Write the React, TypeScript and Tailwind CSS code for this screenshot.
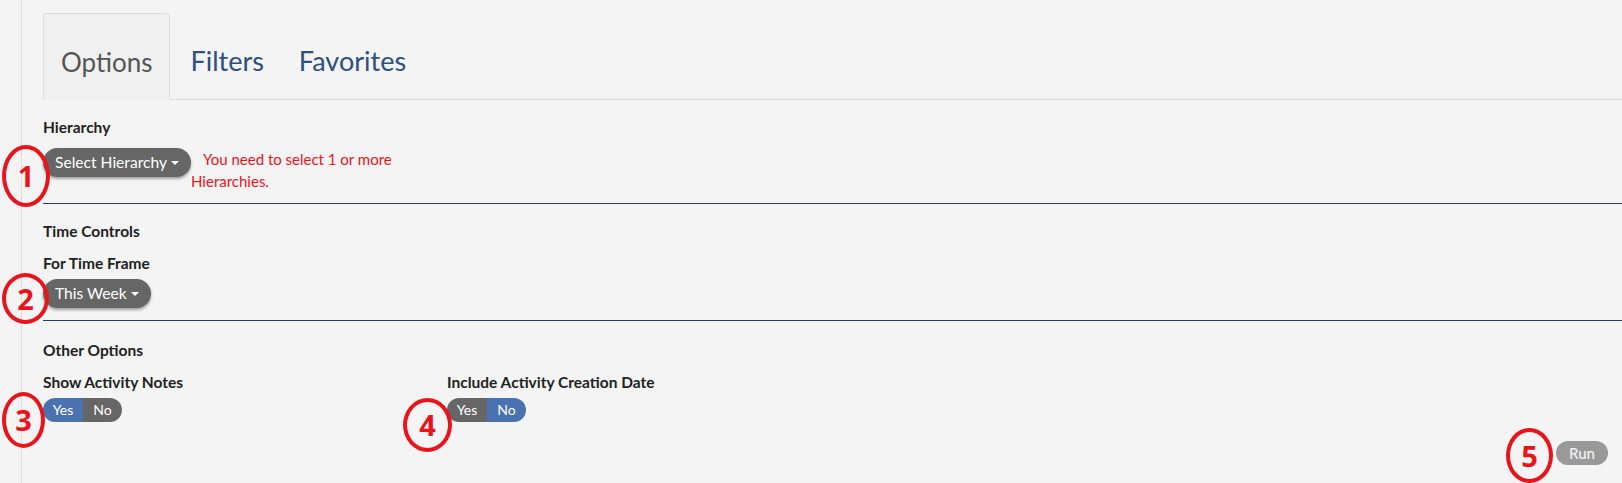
import React from "react";

function Caret() {
  return <span className="ml-[4px] inline-block align-middle border-x-[4px] border-x-transparent border-t-[4px] border-t-white" />;
}

function PillButton({ label }: { label: string }) {
  return (
    <button className="h-[29px] px-[12px] rounded-full bg-[#666666] text-white text-[15.6px] leading-[29px] shadow-[0_2px_3px_rgba(0,0,0,0.35)] flex items-center whitespace-nowrap">
      {label}
      <Caret />
    </button>
  );
}

function YesNo({ yes }: { yes: boolean }) {
  return (
    <div className="flex h-[24px] text-[14px] text-white leading-[24px]">
      <span className={`w-[40px] text-center rounded-l-full ${yes ? "bg-[#4a72b0]" : "bg-[#666666]"}`}>Yes</span>
      <span className={`w-[39px] text-center rounded-r-full ${yes ? "bg-[#666666]" : "bg-[#4a72b0]"}`}>No</span>
    </div>
  );
}

function Marker({ n, className }: { n: number; className: string }) {
  return (
    <div
      className={`absolute rounded-[50%] border-[4px] border-[#e8141c] flex items-center justify-center text-[#e8141c] text-[29px] font-bold font-['Open_Sans',sans-serif] ${className}`}
    >
      {n}
    </div>
  );
}

function Label({ children, className = "" }: { children: React.ReactNode; className?: string }) {
  return <div className={`text-[15.5px] font-bold leading-[20px] text-[#222] ${className}`}>{children}</div>;
}

export default function App() {
  return (
    <div className="relative min-h-[483px] bg-[#f4f4f4] font-['Lato',sans-serif] overflow-hidden">
      <div className="ml-[21px] border-l border-[#dddddd] pl-[21px] min-h-[483px]">
        {/* Tabs */}
        <div className="pt-[13px] flex border-b border-[#dddddd]">
          <div className="-mb-px px-[17px] pt-[31px] pb-[20px] leading-[34px] text-[26px] text-[#555] bg-[#f0f0f0] border border-[#dddddd] border-b-[#f0f0f0] rounded-t-[4px]">
            Options
          </div>
          <div className="pl-[20px] pr-[19px] pt-[31px] pb-[20px] leading-[34px] text-[27px] text-[#2f4f7f]">Filters</div>
          <div className="px-[16px] pt-[31px] pb-[20px] leading-[34px] text-[27px] text-[#2f4f7f]">Favorites</div>
        </div>

        {/* Hierarchy */}
        <Label className="mt-[17px]">Hierarchy</Label>
        <div className="mt-[11px] flex items-start">
          <PillButton label="Select Hierarchy" />
          <div className="w-[205px] indent-[12px] text-[15px] leading-[22px] text-[#e8141c]">
            You need to select 1 or more Hierarchies.
          </div>
        </div>
        <div className="mt-[11px] border-t border-[#2b3a5c]" />

        {/* Time Controls */}
        <Label className="mt-[17px]">Time Controls</Label>
        <Label className="mt-[12px]">For Time Frame</Label>
        <div className="mt-[6px] flex">
          <PillButton label="This Week" />
        </div>
        <div className="mt-[12px] border-t border-[#2b3a5c]" />

        {/* Other Options */}
        <Label className="mt-[19px]">Other Options</Label>
        <div className="mt-[12px] flex">
          <div className="w-[404px]">
            <Label>Show Activity Notes</Label>
            <div className="mt-[6px] flex">
              <YesNo yes />
            </div>
          </div>
          <div>
            <Label>Include Activity Creation Date</Label>
            <div className="mt-[6px] flex">
              <YesNo yes={false} />
            </div>
          </div>
        </div>

        <div className="mt-[19px] flex justify-end pr-[14px]">
          <button className="h-[24px] w-[52px] rounded-full bg-[#999999] text-[#eeeeee] text-[15px] font-semibold leading-[24px]">
            Run
          </button>
        </div>
      </div>

      {/* Annotation markers */}
      <Marker n={1} className="left-[2px] top-[145px] w-[48px] h-[62px]" />
      <Marker n={2} className="left-[2px] top-[273px] w-[47px] h-[51px]" />
      <Marker n={3} className="left-[2px] top-[392px] w-[43px] h-[56px]" />
      <Marker n={4} className="left-[403px] top-[398px] w-[49px] h-[54px]" />
      <Marker n={5} className="left-[1506px] top-[428px] w-[47px] h-[55px]" />
    </div>
  );
}
